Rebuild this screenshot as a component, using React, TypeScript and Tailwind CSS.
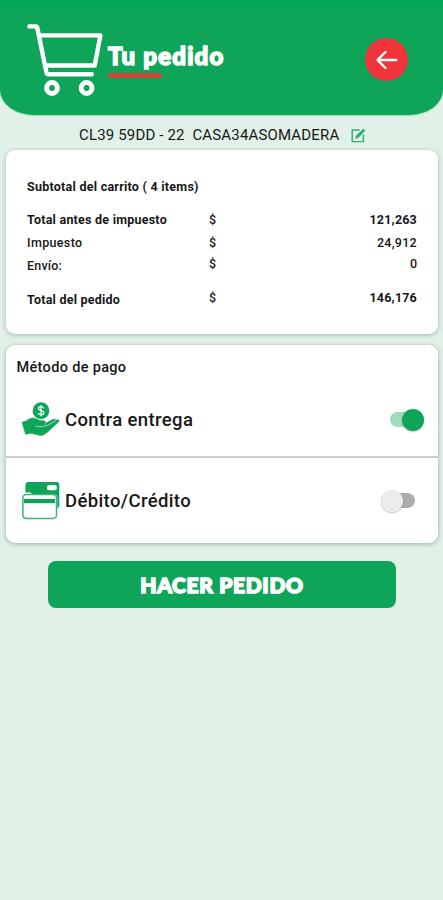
import type { ReactNode } from "react";

const rows = [
  {
    label: "Total antes de impuesto",
    value: "121,263",
    row: "h-[23px] mt-[13px]",
    labelClass: "font-bold tracking-[0.23px]",
    valueClass: "font-bold tracking-[0.2px]",
    shift: "",
  },
  {
    label: "Impuesto",
    value: "24,912",
    row: "h-[23px]",
    labelClass: "font-medium tracking-[0.35px]",
    valueClass: "font-medium tracking-[0.3px]",
    shift: "",
  },
  {
    label: "Envío:",
    value: "0",
    row: "h-[23px]",
    labelClass: "font-medium tracking-[0.2px]",
    valueClass: "font-medium",
    shift: "pb-[4px]",
  },
  {
    label: "Total del pedido",
    value: "146,176",
    row: "h-[23px] mt-[11px]",
    labelClass: "font-bold tracking-[0.22px]",
    valueClass: "font-bold tracking-[0.2px]",
    shift: "pb-[4px]",
  },
];

function CartIcon() {
  return (
    <svg
      width="78"
      height="76"
      viewBox="26 22 78 76"
      fill="none"
      stroke="#fff"
      strokeWidth="4.4"
      strokeLinecap="round"
      strokeLinejoin="round"
    >
      <path d="M29.3 26.4h6.4q1.3 0 1.6 1.4l9 44.2q.5 2.2 2.5 2.2h43" />
      <path d="M39.4 35.4h61L94.7 65.5H46" />
      <circle cx="52" cy="88" r="5.4" strokeWidth="5" />
      <circle cx="86.6" cy="88" r="5.4" strokeWidth="5" />
    </svg>
  );
}

function EditIcon() {
  return (
    <svg
      width="15"
      height="15"
      viewBox="0 0 15 15"
      fill="none"
      stroke="#28ae72"
      strokeWidth="1.4"
      strokeLinecap="round"
      strokeLinejoin="round"
    >
      <path d="M8.2 2H1.2v11.6h11.2V7" />
      <path d="M4.7 10.3l.7-2.8 7-6.6 1.6 1.6-6.7 7z" fill="#28ae72" strokeWidth=".6" />
    </svg>
  );
}

function HandIcon() {
  return (
    <svg width="40" height="36" viewBox="0 0 40 36">
      <circle cx="19" cy="8.7" r="8.4" fill="#0fa558" />
      <path
        d="M21.7 6.2c-.5-1-1.5-1.5-2.7-1.5-1.5 0-2.6.7-2.6 1.9 0 2.8 5.4 1.3 5.4 4.1 0 1.2-1.2 2-2.8 2-1.3 0-2.4-.6-2.9-1.6M19 3.2v11"
        fill="none"
        stroke="#fff"
        strokeWidth="1.2"
      />
      <path
        d="M0 20.3l4.5-1.5c3.4-3 7.3-3.4 10.4-1.6 1.5.9 3.2 1.2 5.2 1.2 2.2 0 3.7 1 3.6 2.8l7-3.6c2-.8 3.2.2 2.8 1l1.5-.7c1.8-.6 2.9.8 1.7 1.9L25.3 30.3c-2.7 2.3-5 3.7-8.1 2.9L9 31.2 3.6 32.3z"
        fill="#0fa558"
        stroke="#0fa558"
        strokeWidth=".6"
      />
      <path
        d="M13.5 24.1c3 .8 6.1.8 8.8.1 1.2-.4 1.7-1.5 1.3-2.7M24.4 24l9.1-5.2"
        fill="none"
        stroke="#b9e8cf"
        strokeWidth=".8"
        strokeLinecap="round"
      />
    </svg>
  );
}

function CardsIcon() {
  return (
    <svg width="40" height="40" viewBox="1 0 40 40">
      <path
        d="M6.8 1h28.5a3 3 0 0 1 3 3v20.5a3 3 0 0 1-2 2.7V17a3.7 3.7 0 0 0-3.7-3.7H11.5a5 5 0 0 0-4.4-1.9H4.4V4a3 3 0 0 1 2.4-3z"
        fill="#0fa558"
      />
      <rect x="26" y="4" width="9.8" height="5.2" rx="2" fill="#fff" />
      <rect x="1.9" y="13.4" width="33.6" height="24.2" rx="3.5" fill="#fff" stroke="#36b878" strokeWidth="1.5" />
      <path d="M3 18h31v4.2H3z" fill="#0fa558" />
    </svg>
  );
}

function Toggle({ on }: { on: boolean }) {
  if (on) {
    return (
      <div className="flex h-[15px] w-[34px] items-center justify-end rounded-full bg-[#9fdcbd]">
        <div className="size-[22px] shrink-0 rounded-full bg-[#0fa558] shadow-[0_1px_2px_rgba(0,0,0,0.2)]" />
      </div>
    );
  }
  return (
    <div className="mr-[9px] flex h-[15px] w-[34px] items-center rounded-full bg-[#adadad]">
      <div className="size-[22px] shrink-0 rounded-full bg-[#ececec] shadow-[0_1px_2px_rgba(0,0,0,0.25)]" />
    </div>
  );
}

function PaymentMethod({ icon, label, on }: { icon: ReactNode; label: string; on: boolean }) {
  return (
    <div className="flex flex-1 items-center">
      <div className="w-[43px]">{icon}</div>
      <span className="flex-1 text-[18.5px] leading-6 font-medium tracking-[0.38px]">{label}</span>
      <Toggle on={on} />
    </div>
  );
}

export default function App() {
  return (
    <main className="flex h-[900px] w-full flex-col overflow-hidden bg-[#e1f1e8] font-[Roboto,sans-serif] text-[#181818]">
      <header className="flex h-[115px] shrink-0 items-start rounded-b-[34px_25px] bg-linear-to-b from-[#03a858] from-0% to-[#0fa558] to-15% pt-[22px] pr-[35px] pl-[26px] shadow-[0_1px_1px_#9ce3bf]">
        <CartIcon />
        <div className="ml-1 flex flex-1 flex-col pt-[20px]">
          <h1 className="font-[Lato,sans-serif] text-[24px] leading-7 font-black tracking-[1.2px] text-white [-webkit-text-stroke:1.5px_white]">
            Tu pedido
          </h1>
          <div className="mt-[3px] h-[5px] w-[54px] rounded-full bg-[#d0463d]" />
        </div>
        <button className="mt-[16px] flex size-[43px] items-center justify-center rounded-full bg-[#ef343c]">
          <svg
            width="22"
            height="20"
            viewBox="0 0 22 20"
            fill="none"
            stroke="#fff"
            strokeWidth="2.3"
            strokeLinecap="round"
            strokeLinejoin="round"
          >
            <path d="M20.5 10H1.5M9.5 2l-8 8 8 8" />
          </svg>
        </button>
      </header>

      <div className="flex h-[35px] shrink-0 items-center pt-[5px] pl-[79px]">
        <span className="w-[272px] text-[15px] tracking-[0.16px] whitespace-pre">
          {"CL39 59DD - 22  CASA34ASOMADERA"}
        </span>
        <EditIcon />
      </div>

      <section className="mr-[5px] ml-[6px] h-[184px] shrink-0 rounded-[9px] bg-white pt-[27px] pr-[21px] pl-[21px] text-[12.5px] shadow-[0_1px_5px_rgba(0,40,20,0.28)]">
        <h2 className="h-[19px] leading-[19px] font-bold tracking-[0.25px]">Subtotal del carrito ( 4 items)</h2>
        {rows.map((row) => (
          <div key={row.label} className={`flex items-center ${row.row}`}>
            <span className={`w-[182px] ${row.labelClass}`}>{row.label}</span>
            <span className={`font-medium ${row.shift}`}>$</span>
            <span className={`flex-1 text-right ${row.valueClass} ${row.shift}`}>{row.value}</span>
          </div>
        ))}
      </section>

      <section className="mt-[11px] mr-[5px] ml-[6px] flex h-[198px] shrink-0 flex-col rounded-[9px] bg-white shadow-[0_1px_5px_rgba(0,40,20,0.32)]">
        <h2 className="h-[33px] pt-[12px] pl-[10.5px] text-[14.5px] leading-[22px] font-medium tracking-[0.33px]">
          Método de pago
        </h2>
        <div className="flex h-[80px] border-b-2 border-[#cecece] pt-[5px] pr-[14px] pl-[16px]">
          <PaymentMethod icon={<HandIcon />} label="Contra entrega" on />
        </div>
        <div className="flex flex-1 pr-[14px] pl-[16px]">
          <PaymentMethod icon={<CardsIcon />} label="Débito/Crédito" on={false} />
        </div>
      </section>

      <button className="mt-[18px] mr-[47px] ml-[48px] h-[47px] shrink-0 rounded-[8px] bg-[#0fa558] font-[Lato,sans-serif] text-[21px] font-black tracking-[0.65px] text-white [-webkit-text-stroke:1.5px_white]">
        HACER PEDIDO
      </button>
    </main>
  );
}
